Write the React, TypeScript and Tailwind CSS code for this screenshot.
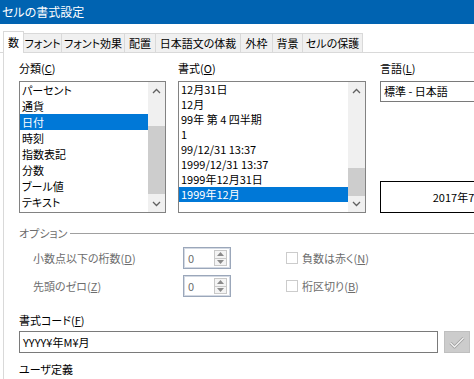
import React from "react";

const tabs = [
  { label: "数", w: 21, selected: true },
  { label: "フォント", w: 38 },
  { label: "フォント効果", w: 63 },
  { label: "配置", w: 31 },
  { label: "日本語文の体裁", w: 85 },
  { label: "外枠", w: 32 },
  { label: "背景", w: 30 },
  { label: "セルの保護", w: 60 },
];

const categories = [
  "パーセント",
  "通貨",
  "日付",
  "時刻",
  "指数表記",
  "分数",
  "ブール値",
  "テキスト",
];

const formats = [
  "12月31日",
  "12月",
  "99年 第 4 四半期",
  "1",
  "99/12/31 13:37",
  "1999/12/31 13:37",
  "1999年12月31日",
  "1999年12月",
];

const Label = ({ text, k }: { text: string; k: string }) => (
  <span>
    {text}(<span className="underline">{k}</span>)
  </span>
);

const Chevron = ({ up }: { up?: boolean }) => (
  <svg width="9" height="6" viewBox="0 0 9 6">
    <polyline
      points={up ? "1,5 4.5,1.5 8,5" : "1,1 4.5,4.5 8,1"}
      fill="none"
      stroke="#606060"
      strokeWidth="1.3"
    />
  </svg>
);

const ScrollBar = ({ thumbTop, thumbH }: { thumbTop: number; thumbH: number }) => (
  <div className="flex w-[17px] shrink-0 flex-col bg-[#f0f0f0]">
    <div className="flex h-[17px] items-center justify-center">
      <Chevron up />
    </div>
    <div className="relative flex-1">
      <div
        className="absolute left-0 w-full bg-[#cdcdcd]"
        style={{ top: thumbTop, height: thumbH }}
      />
    </div>
    <div className="flex h-[17px] items-center justify-center">
      <Chevron />
    </div>
  </div>
);

const SpinBox = () => (
  <div className="flex h-[22px] w-[48px] items-center border border-[#9ba7ba] bg-white shadow-[inset_0_0_0_1px_#d3d9e3]">
    <span className="flex-1 pl-[4px] text-[#6d6d6d]">0</span>
    <div className="mr-[3px] flex h-[16px] w-[13px] flex-col border border-[#c8c8c8] bg-[#f4f4f4]">
      <div className="flex flex-1 items-center justify-center border-b border-[#c8c8c8]">
        <svg width="7" height="4" viewBox="0 0 7 4">
          <polygon points="0,4 3.5,0 7,4" fill="#8a8a8a" />
        </svg>
      </div>
      <div className="flex flex-1 items-center justify-center">
        <svg width="7" height="4" viewBox="0 0 7 4">
          <polygon points="0,0 3.5,4 7,0" fill="#8a8a8a" />
        </svg>
      </div>
    </div>
  </div>
);

const CheckBox = ({ text, k }: { text: string; k: string }) => (
  <div className="flex items-center">
    <div className="h-[12px] w-[12px] border border-[#cccccc] bg-white" />
    <span className="ml-[4px] text-[#6d6d6d]">
      <Label text={text} k={k} />
    </span>
  </div>
);

export default function App() {
  return (
    <div className="h-[379px] w-[474px] overflow-hidden bg-white font-['Noto_Sans_CJK_JP',sans-serif] text-[11px] text-black [font-feature-settings:'palt']">
      <div className="flex h-[24px] items-center bg-[#0063b1] pl-[2px] text-[12px] text-white">
        セルの書式設定
      </div>

      <div className="flex h-[29px] items-end border-b border-[#d9d9d9] pl-[3px]">
        {tabs.map((t) =>
          t.selected ? (
            <div
              key={t.label}
              className="-mb-px flex h-[22px] shrink-0 items-center justify-center border-x border-t border-[#d9d9d9] bg-white"
              style={{ width: t.w }}
            >
              {t.label}
            </div>
          ) : (
            <div
              key={t.label}
              className="flex h-[19px] shrink-0 items-center justify-center border-r border-t border-[#d9d9d9] bg-[#f0f0f0]"
              style={{ width: t.w }}
            >
              {t.label}
            </div>
          )
        )}
      </div>

      <div className="ml-[3px] h-[326px] border-l border-[#d9d9d9] pl-[15px] pt-[7px]">
        {/* category / format / language */}
        <div className="flex">
          <div className="w-[147px] shrink-0">
            <div className="h-[16px] leading-[16px]">
              <Label text="分類" k="C" />
            </div>
            <div className="mt-[5px] flex h-[132px] border border-[#828282]">
              <div className="flex-1">
                {categories.map((c) => (
                  <div
                    key={c}
                    className={
                      "h-[16px] pl-[2px] leading-[16px] " +
                      (c === "日付" ? "bg-[#0078d7] text-white" : "")
                    }
                  >
                    {c}
                  </div>
                ))}
              </div>
              <ScrollBar thumbTop={27} thumbH={68} />
            </div>
          </div>

          <div className="ml-[12px] w-[188px] shrink-0">
            <div className="h-[16px] leading-[16px]">
              <Label text="書式" k="O" />
            </div>
            <div className="mt-[5px] flex h-[132px] border border-[#828282]">
              <div className="flex-1">
                {formats.map((f) => (
                  <div
                    key={f}
                    className={
                      "h-[15px] pl-[2px] leading-[15px] " +
                      (f === "1999年12月" ? "bg-[#0078d7] text-white" : "")
                    }
                  >
                    {f}
                  </div>
                ))}
              </div>
              <ScrollBar thumbTop={69} thumbH={28} />
            </div>
          </div>

          <div className="ml-[14px] w-[158px] shrink-0">
            <div className="h-[16px] leading-[16px]">
              <Label text="言語" k="L" />
            </div>
            <div className="mt-[5px] flex h-[21px] items-center border border-[#7a7a7a] pl-[3px]">
              標準 - 日本語
            </div>
            <div className="mt-[79px] flex h-[32px] items-center justify-center border border-black">
              2017年7月
            </div>
          </div>
        </div>

        {/* options */}
        <div className="mt-[12px] flex h-[16px] items-center text-[#6d6d6d]">
          <span>オプション</span>
          <div className="ml-[3px] h-px flex-1 bg-[#a0a0a0]" />
        </div>

        <div className="mt-[6px] flex h-[22px] items-center pl-[14px]">
          <div className="w-[150px] text-[#6d6d6d]">
            <Label text="小数点以下の桁数" k="D" />
          </div>
          <SpinBox />
          <div className="ml-[55px]">
            <CheckBox text="負数は赤く" k="N" />
          </div>
        </div>

        <div className="mt-[6px] flex h-[22px] items-center pl-[14px]">
          <div className="w-[150px] text-[#6d6d6d]">
            <Label text="先頭のゼロ" k="Z" />
          </div>
          <SpinBox />
          <div className="ml-[55px]">
            <CheckBox text="桁区切り" k="B" />
          </div>
        </div>

        {/* format code */}
        <div className="mt-[15px] h-[16px] leading-[16px]">
          <Label text="書式コード" k="F" />
        </div>
        <div className="mt-[3px] flex items-center">
          <div className="flex h-[22px] w-[419px] items-center border border-[#7a7a7a] pl-[3px]">
            YYYY¥年M¥月
          </div>
          <div className="ml-[6px] flex h-[22px] w-[26px] items-center justify-center border border-[#bfbfbf] bg-[#cccccc]">
            <svg width="16" height="13" viewBox="0 0 16 13">
              <polyline
                points="1.5,7 5.5,11 14.5,2"
                fill="none"
                stroke="#9e9e9e"
                strokeWidth="3"
                strokeLinejoin="round"
              />
              <polyline
                points="1.5,7 5.5,11 14.5,2"
                fill="none"
                stroke="#f2f2f2"
                strokeWidth="1.4"
                strokeLinejoin="round"
              />
            </svg>
          </div>
        </div>

        <div className="mt-[8px] h-[16px] leading-[16px]">ユーザ定義</div>
      </div>
    </div>
  );
}
